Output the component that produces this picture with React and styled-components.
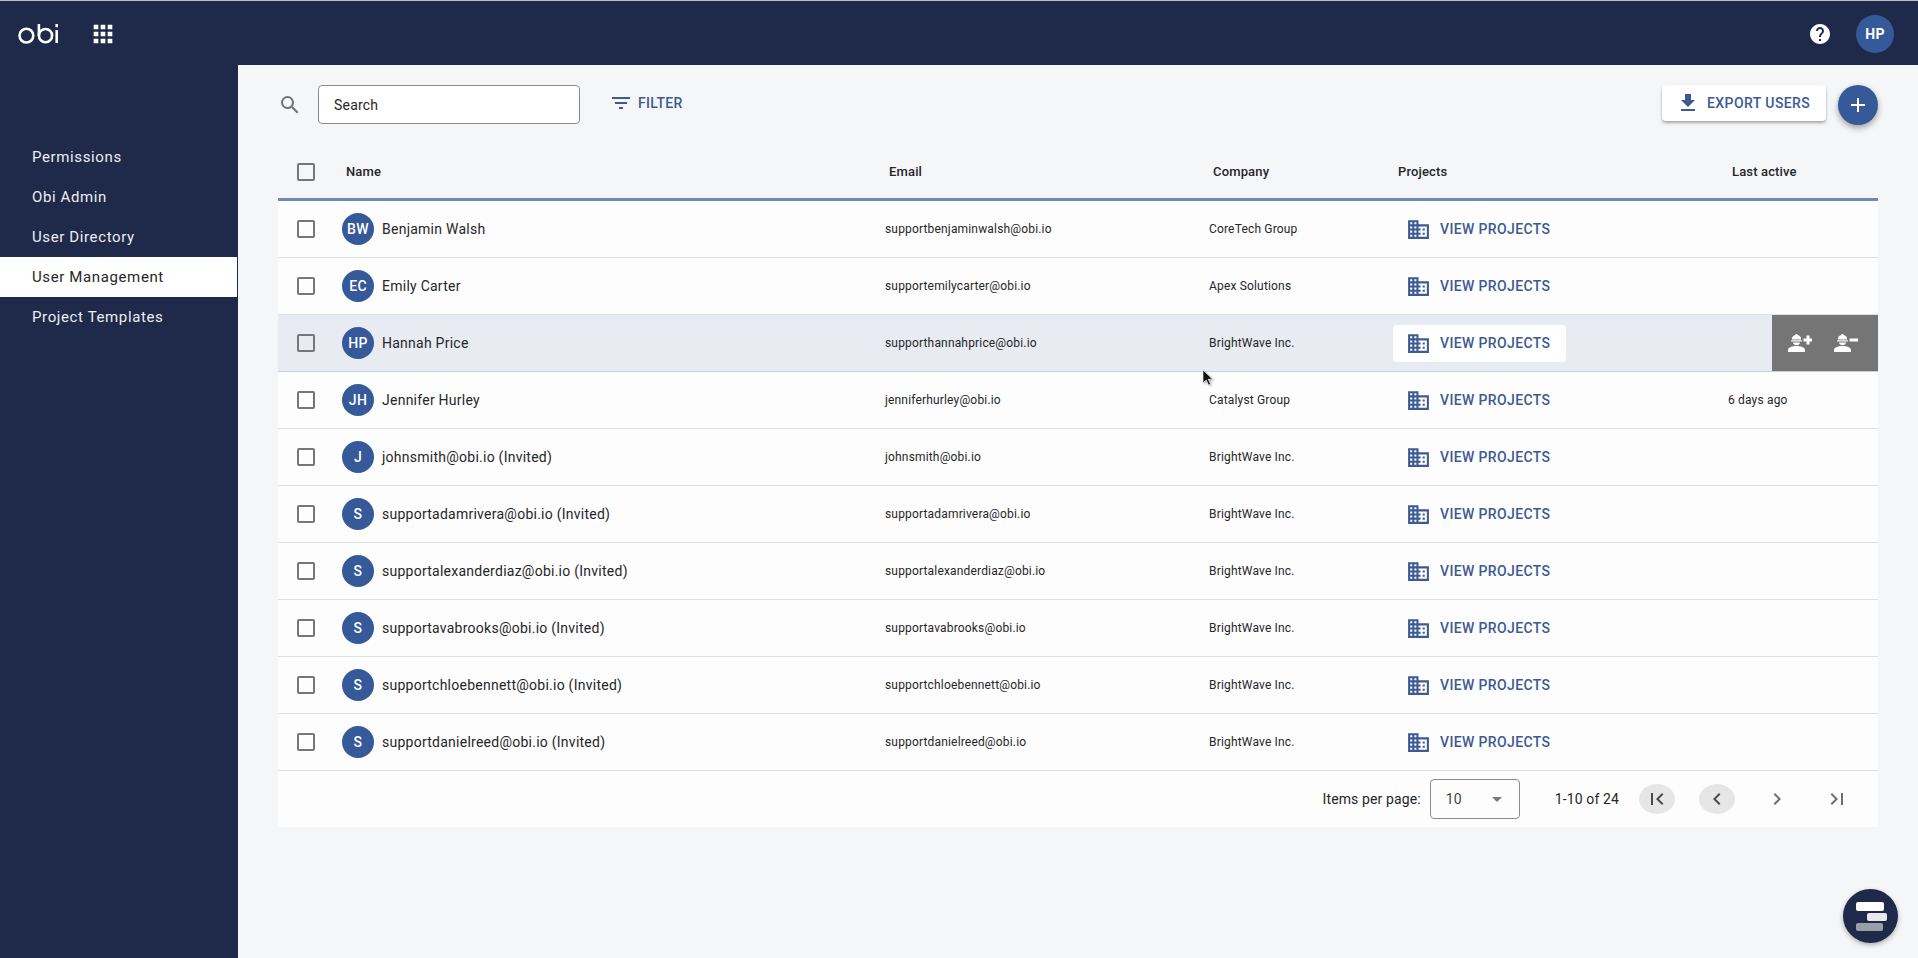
import React from 'react';
import styled, { createGlobalStyle } from 'styled-components';
import {
  MdAdd,
  MdApps,
  MdArrowDropDown,
  MdChevronLeft,
  MdChevronRight,
  MdDomain,
  MdFileDownload,
  MdFilterList,
  MdFirstPage,
  MdHelp,
  MdLastPage,
  MdSearch,
} from 'react-icons/md';

const NAVY = '#1f2949';
const BLUE = '#36599a';
const LINK = '#3d5a92';
const INK = '#262628';

const GlobalStyle = createGlobalStyle`
  html, body {
    margin: 0;
    height: 100%;
    background: ${NAVY};
  }
  body {
    font-family: Roboto, "Liberation Sans", sans-serif;
    color: ${INK};
    -webkit-font-smoothing: antialiased;
  }
`;

const Page = styled.div`
  width: 1918px;
  height: 958px;
  display: grid;
  grid-template-columns: 238px 1fr;
  grid-template-rows: 65px 1fr;
  position: relative;
  overflow: hidden;
  background: ${NAVY};
`;

const TopBar = styled.header`
  grid-column: 1 / 3;
  display: flex;
  align-items: center;
  padding: 1px 24px 0 18px;
  border-top: 1px solid #b9bcc4;
`;

const AppsButton = styled.span`
  display: flex;
  margin-left: 30px;
  color: #fff;
`;

const TopRight = styled.div`
  margin-left: auto;
  display: flex;
  align-items: center;
  gap: 24px;
  color: #fff;
`;

const Avatar = styled.span`
  flex: none;
  display: flex;
  align-items: center;
  justify-content: center;
  width: ${({ $size }) => $size || 32}px;
  height: ${({ $size }) => $size || 32}px;
  border-radius: 50%;
  background: ${BLUE};
  color: #fff;
  font-size: 14px;
  font-weight: ${({ $bold }) => ($bold ? 700 : 500)};
  letter-spacing: 0.3px;
`;

const Sidebar = styled.nav`
  padding-top: 72px;
  display: flex;
  flex-direction: column;
`;

const NavItem = styled.a`
  height: 40px;
  width: 237px;
  box-sizing: border-box;
  padding-left: 32px;
  display: flex;
  align-items: center;
  font-size: 15px;
  letter-spacing: 0.62px;
  color: ${({ $active }) => ($active ? INK : '#eceef2')};
  background: ${({ $active }) => ($active ? '#fff' : 'transparent')};
`;

const Main = styled.main`
  background: #f5f6f8;
  padding: 20px 40px 0;
`;

const Toolbar = styled.div`
  height: 65px;
  display: flex;
  align-items: flex-start;
`;

const SearchIcon = styled.span`
  display: flex;
  margin: 8px 16px 0 0;
  color: #6f7378;
`;

const SearchBox = styled.div`
  width: 262px;
  height: 39px;
  box-sizing: border-box;
  border: 1px solid #8b8b8b;
  border-radius: 4px;
  background: #fff;
  padding-left: 15px;
  display: flex;
  align-items: center;
  font-size: 14px;
  letter-spacing: 0.2px;
`;

const FilterButton = styled.span`
  display: flex;
  align-items: center;
  gap: 5px;
  margin: 6px 0 0 29px;
  color: ${LINK};
  font-size: 14px;
  font-weight: 500;
  letter-spacing: 0.3px;
`;

const ToolbarEnd = styled.div`
  margin-left: auto;
  display: flex;
  align-items: flex-start;
  gap: 12px;
`;

const ExportButton = styled.span`
  width: 164px;
  height: 36px;
  box-sizing: border-box;
  padding-left: 14px;
  display: flex;
  align-items: center;
  gap: 7px;
  background: #fff;
  border-radius: 4px;
  box-shadow: 0 2px 3px rgba(0, 0, 0, 0.32);
  color: ${LINK};
  font-size: 14px;
  font-weight: 500;
  letter-spacing: 0.42px;
`;

const AddButton = styled.span`
  width: 40px;
  height: 40px;
  border-radius: 50%;
  display: flex;
  align-items: center;
  justify-content: center;
  background: ${BLUE};
  color: #fff;
  box-shadow: 0 3px 6px rgba(0, 0, 0, 0.35);
`;

const columns = '64px 543px 324px 184px 335px 1fr';

const HeaderRow = styled.div`
  display: grid;
  grid-template-columns: ${columns};
  align-items: center;
  height: 51px;
  box-sizing: border-box;
  padding-bottom: 5px;
  border-bottom: 3px solid #7089b4;
  font-size: 13px;
  font-weight: 500;
  letter-spacing: 0.15px;
`;

const HeaderCell = styled.span`
  padding-left: ${({ $inset }) => $inset || 4}px;
`;

const Row = styled.div`
  position: relative;
  display: grid;
  grid-template-columns: ${columns};
  align-items: center;
  height: 57px;
  box-sizing: border-box;
  border-bottom: 1px solid ${({ $hover }) => ($hover ? '#ccd0d8' : '#dfe0e2')};
  background: ${({ $hover }) => ($hover ? '#e8ebf1' : '#fdfdfe')};
`;

const Box = styled.span`
  display: block;
  width: 18px;
  height: 18px;
  box-sizing: border-box;
  margin-left: 19px;
  border: 2px solid #767676;
  border-radius: 2px;
`;

const NameCell = styled.div`
  display: flex;
  align-items: center;
  gap: 8px;
  font-size: 14px;
  letter-spacing: 0.25px;
`;

const SmallCell = styled.span`
  font-size: 12px;
  letter-spacing: 0.17px;
`;

const ProjectsButton = styled.span`
  width: 173px;
  height: 37px;
  box-sizing: border-box;
  padding-left: 13px;
  display: flex;
  align-items: center;
  gap: 9px;
  border-radius: 4px;
  background: ${({ $hover }) => ($hover ? '#fff' : 'transparent')};
  color: ${LINK};
  font-size: 14px;
  font-weight: 500;
  letter-spacing: 0.37px;
`;

const RowActions = styled.div`
  position: absolute;
  top: 0;
  right: 0;
  bottom: 0;
  width: 106px;
  box-sizing: border-box;
  padding-left: 16px;
  display: flex;
  align-items: center;
  gap: 22px;
  background: #757575;
`;

const Paginator = styled.div`
  height: 56px;
  padding-right: 23px;
  display: flex;
  align-items: center;
  justify-content: flex-end;
  background: #fdfdfe;
  font-size: 14px;
  letter-spacing: 0.12px;
`;

const PageSize = styled.div`
  width: 90px;
  height: 40px;
  box-sizing: border-box;
  margin: 0 35px 0 9px;
  padding: 0 10px 0 15px;
  display: flex;
  align-items: center;
  justify-content: space-between;
  border: 1px solid #8b8b8b;
  border-radius: 4px;
  font-size: 14px;
  color: #444;
`;

const PageSizeArrow = styled.span`
  display: flex;
  color: #7a7a7a;
`;

const PageButtons = styled.div`
  display: flex;
  gap: 24px;
  margin-left: 20px;
`;

const PageButton = styled.span`
  width: 36px;
  height: 30px;
  border-radius: 50%;
  display: flex;
  align-items: center;
  justify-content: center;
  background: ${({ $disabled }) => ($disabled ? '#e6e6e6' : 'transparent')};
  color: ${({ $disabled }) => ($disabled ? '#4a4a4a' : '#6f6f6f')};
`;

const Cursor = styled.svg`
  position: absolute;
  left: 1202px;
  top: 369px;
  filter: drop-shadow(1px 1px 1px rgba(0, 0, 0, 0.35));
`;

const ChatBubble = styled.span`
  position: absolute;
  left: 1843px;
  top: 889px;
  width: 55px;
  height: 54px;
  border-radius: 50%;
  display: flex;
  align-items: center;
  justify-content: center;
  background: ${NAVY};
  box-shadow: 0 2px 5px rgba(0, 0, 0, 0.3);
`;

const ObiLogo = () => (
  <svg width="41" height="20" viewBox="0 0 41 20" fill="none" stroke="#fff" strokeWidth="2.6">
    <circle cx="8.4" cy="11.6" r="6.900" />
    <circle cx="27.500" cy="11.600" r="6.600" />
    <path d="M20.900 0v11.600" />
    <path d="M38.700 6v13" />
    <path d="M38.700 0v3.200" />
  </svg>
);

const WorkerIcon = ({ minus }) => (
  <svg width="24" height="18" viewBox="0 0 24 18" fill="#fff">
    <path d="M3.800 5.600C3.800 3 5.200 1.200 7.600 1V0h1.800v1c2.400.2 3.800 2 3.800 4.600z" />
    <rect x="3" y="6.200" width="11" height="1.400" rx=".7" />
    <path d="M5 8.400h7a3.600 3.600 0 0 1-7 0z" />
    <path d="M0 18v-2.200c0-2.400 4.600-3.800 8.500-3.800s8.500 1.400 8.500 3.800V18z" />
    {minus ? (
      <rect x="15.500" y="4.500" width="8.500" height="3" />
    ) : (
      <path d="M18.500 1.500h3v3H24.500v3h-3v3h-3v-3H15.500v-3h3z" />
    )}
  </svg>
);

const BarsLogo = () => (
  <svg width="32" height="30" viewBox="0 0 32 30">
    <rect x="1" y="1" width="28" height="9" rx="2" fill="#fff" />
    <rect x="12" y="12" width="20" height="8" rx="2" fill="#e8e9ec" />
    <rect x="1" y="22" width="27" height="8" rx="2" fill="#9a9ea9" />
  </svg>
);

const navItems = ['Permissions', 'Obi Admin', 'User Directory', 'User Management', 'Project Templates'];

const users = [
  { initials: 'BW', name: 'Benjamin Walsh', email: 'supportbenjaminwalsh@obi.io', company: 'CoreTech Group' },
  { initials: 'EC', name: 'Emily Carter', email: 'supportemilycarter@obi.io', company: 'Apex Solutions' },
  { initials: 'HP', name: 'Hannah Price', email: 'supporthannahprice@obi.io', company: 'BrightWave Inc.', hover: true },
  { initials: 'JH', name: 'Jennifer Hurley', email: 'jenniferhurley@obi.io', company: 'Catalyst Group', active: '6 days ago' },
  { initials: 'J', name: 'johnsmith@obi.io (Invited)', email: 'johnsmith@obi.io', company: 'BrightWave Inc.' },
  { initials: 'S', name: 'supportadamrivera@obi.io (Invited)', email: 'supportadamrivera@obi.io', company: 'BrightWave Inc.' },
  { initials: 'S', name: 'supportalexanderdiaz@obi.io (Invited)', email: 'supportalexanderdiaz@obi.io', company: 'BrightWave Inc.' },
  { initials: 'S', name: 'supportavabrooks@obi.io (Invited)', email: 'supportavabrooks@obi.io', company: 'BrightWave Inc.' },
  { initials: 'S', name: 'supportchloebennett@obi.io (Invited)', email: 'supportchloebennett@obi.io', company: 'BrightWave Inc.' },
  { initials: 'S', name: 'supportdanielreed@obi.io (Invited)', email: 'supportdanielreed@obi.io', company: 'BrightWave Inc.' },
];

const App = () => (
  <Page>
    <GlobalStyle />
    <TopBar>
      <ObiLogo />
      <AppsButton>
        <MdApps size={28} />
      </AppsButton>
      <TopRight>
        <MdHelp size={24} />
        <Avatar $size={38} $bold>HP</Avatar>
      </TopRight>
    </TopBar>

    <Sidebar>
      {navItems.map((item) => (
        <NavItem key={item} $active={item === 'User Management'}>{item}</NavItem>
      ))}
    </Sidebar>

    <Main>
      <Toolbar>
        <SearchIcon>
          <MdSearch size={24} />
        </SearchIcon>
        <SearchBox>Search</SearchBox>
        <FilterButton>
          <MdFilterList size={24} />
          FILTER
        </FilterButton>
        <ToolbarEnd>
          <ExportButton>
            <MdFileDownload size={24} />
            EXPORT USERS
          </ExportButton>
          <AddButton>
            <MdAdd size={24} />
          </AddButton>
        </ToolbarEnd>
      </Toolbar>

      <HeaderRow>
        <Box />
        <HeaderCell>Name</HeaderCell>
        <HeaderCell>Email</HeaderCell>
        <HeaderCell>Company</HeaderCell>
        <HeaderCell $inset={5}>Projects</HeaderCell>
        <HeaderCell>Last active</HeaderCell>
      </HeaderRow>

      {users.map((user) => (
        <Row key={user.email} $hover={user.hover}>
          <Box />
          <NameCell>
            <Avatar>{user.initials}</Avatar>
            {user.name}
          </NameCell>
          <SmallCell>{user.email}</SmallCell>
          <SmallCell>{user.company}</SmallCell>
          <ProjectsButton $hover={user.hover}>
            <MdDomain size={25} />
            VIEW PROJECTS
          </ProjectsButton>
          <SmallCell>{user.active}</SmallCell>
          {user.hover && (
            <RowActions>
              <WorkerIcon />
              <WorkerIcon minus />
            </RowActions>
          )}
        </Row>
      ))}

      <Paginator>
        Items per page:
        <PageSize>
          10
          <PageSizeArrow>
            <MdArrowDropDown size={24} />
          </PageSizeArrow>
        </PageSize>
        1-10 of 24
        <PageButtons>
          <PageButton $disabled><MdFirstPage size={24} /></PageButton>
          <PageButton $disabled><MdChevronLeft size={24} /></PageButton>
          <PageButton><MdChevronRight size={24} /></PageButton>
          <PageButton><MdLastPage size={24} /></PageButton>
        </PageButtons>
      </Paginator>
    </Main>

    <Cursor width="12" height="18" viewBox="0 0 12 18">
      <path d="M1 1v13l3.200-3 2.300 5 2-1-2.300-4.800H10.500z" fill="#111" stroke="#fff" strokeWidth=".6" />
    </Cursor>
    <ChatBubble>
      <BarsLogo />
    </ChatBubble>
  </Page>
);

export default App;
